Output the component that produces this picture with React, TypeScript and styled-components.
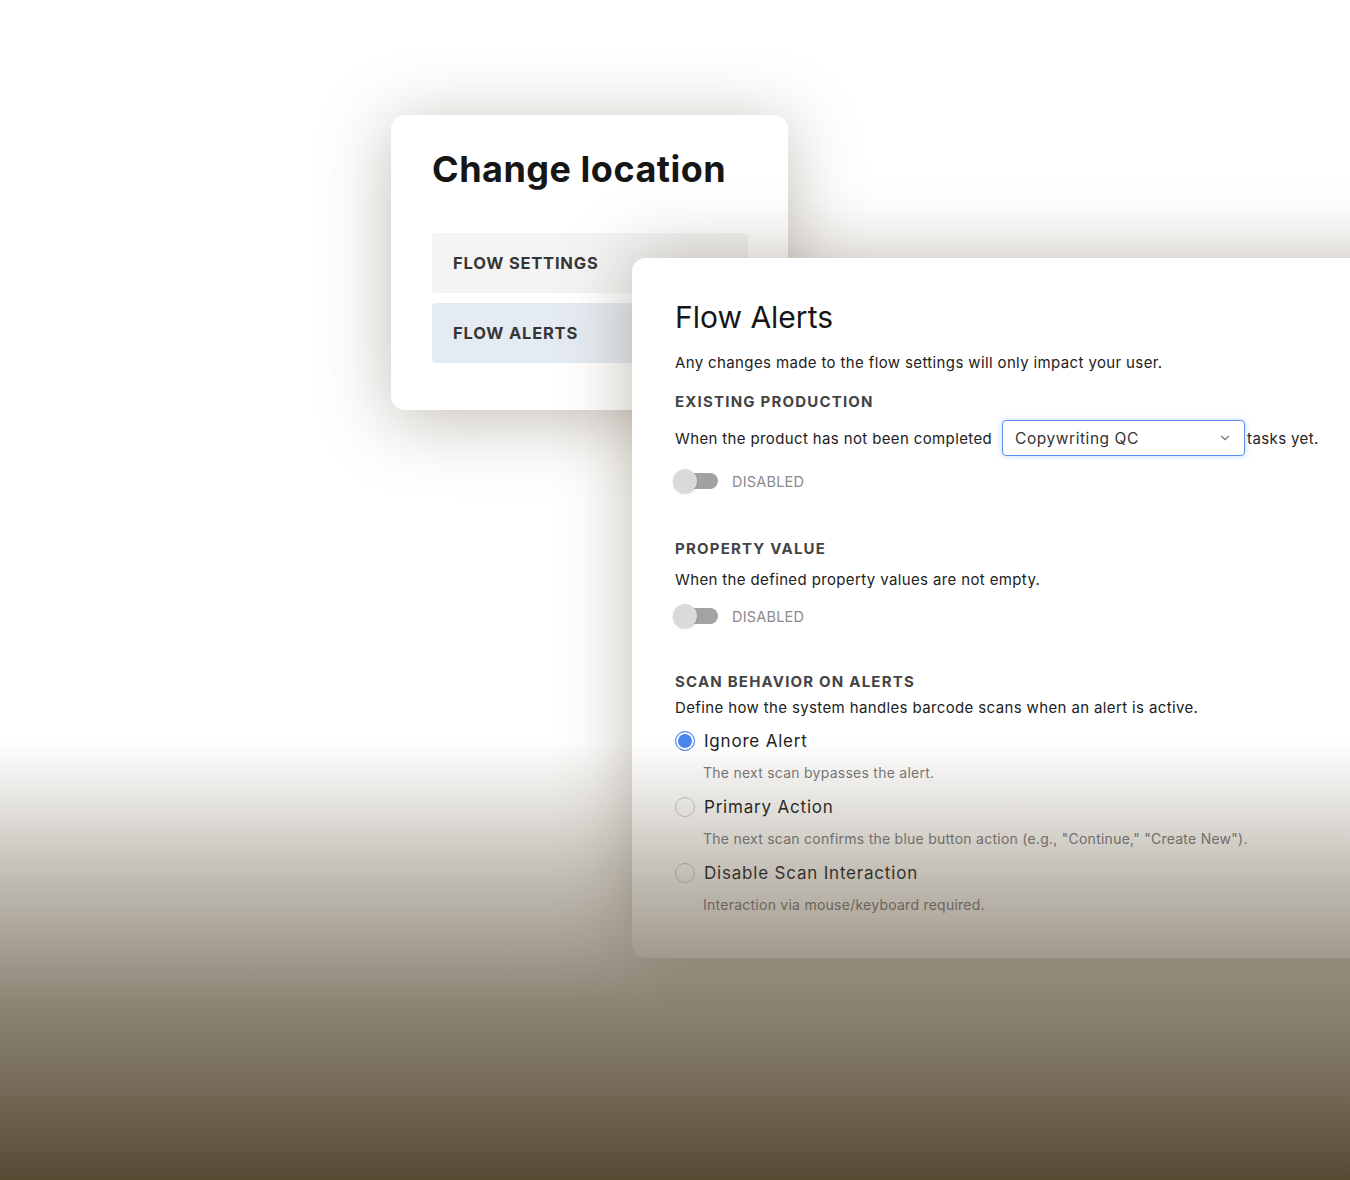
import styled, { createGlobalStyle } from "styled-components";
import { ChevronDown } from "lucide-react";

const GlobalStyle = createGlobalStyle`
  html, body {
    margin: 0;
    padding: 0;
    background: #ffffff;
  }
  body {
    font-family: Inter, "Noto Sans", "Liberation Sans", sans-serif;
    color: #1c1c1c;
    -webkit-font-smoothing: antialiased;
  }
`;

const Page = styled.div`
  position: relative;
  width: 1350px;
  height: 1180px;
  overflow: hidden;
  background: #ffffff;
`;

// two floating windows that overlap each other
const Stage = styled.div`
  display: grid;
  grid-template-columns: 391px 241px 156px 1fr;
  grid-template-rows: 115px 143px 152px auto;
`;

const LocationCard = styled.section`
  grid-column: 2 / 4;
  grid-row: 2 / 4;
  z-index: 1;
  background: #ffffff;
  border-radius: 14px;
  padding: 32px 40px 47px 41px;
  box-shadow: 0 10px 70px rgba(110, 98, 78, 0.42);
`;

const LocationTitle = styled.h1`
  margin: 0 0 42px;
  font-size: 36px;
  line-height: 44px;
  font-weight: 700;
  letter-spacing: 0.5px;
  color: #161616;
`;

const NavList = styled.div`
  display: flex;
  flex-direction: column;
  gap: 10px;
`;

const NavItem = styled.div<{ $active?: boolean }>`
  display: flex;
  align-items: center;
  height: 60px;
  padding-left: 21px;
  border-radius: 4px;
  background: ${(p) => (p.$active ? "#e5ebf2" : "#f4f4f4")};
  font-size: 16.5px;
  font-weight: 700;
  letter-spacing: 0.8px;
  color: #363636;
  text-transform: uppercase;
`;

const AlertsCard = styled.section`
  grid-column: 3 / 5;
  grid-row: 3 / 5;
  z-index: 2;
  width: 760px;
  background: #ffffff;
  border-radius: 14px;
  padding: 40px 0 43px 43px;
  box-shadow: 0 0 70px rgba(110, 98, 78, 0.45);
`;

const AlertsTitle = styled.h2`
  margin: 0 0 16px;
  font-size: 30px;
  line-height: 38px;
  font-weight: 400;
  color: #161616;
`;

const Text = styled.p<{ $gap?: number }>`
  margin: 0 0 ${(p) => p.$gap ?? 0}px;
  font-size: 15px;
  line-height: 22px;
  letter-spacing: 0.37px;
  color: #222222;
`;

const SectionLabel = styled.h3<{ $gap?: number }>`
  margin: 0 0 ${(p) => p.$gap ?? 0}px;
  font-size: 15px;
  line-height: 22px;
  font-weight: 700;
  letter-spacing: 1.2px;
  color: #444444;
  text-transform: uppercase;
`;

const Section = styled.div<{ $gap?: number }>`
  display: flex;
  flex-direction: column;
  margin-bottom: ${(p) => p.$gap ?? 0}px;
`;

const InlineRow = styled.div`
  display: flex;
  align-items: center;
  gap: 2px;
  font-size: 15px;
  letter-spacing: 0.37px;
  color: #222222;
`;

const Select = styled.div`
  display: flex;
  align-items: center;
  justify-content: space-between;
  width: 243px;
  height: 36px;
  box-sizing: border-box;
  margin-left: 8px;
  padding: 0 12px 0 12px;
  border: 1px solid #5b8ff0;
  border-radius: 4px;
  box-shadow: 0 0 6px rgba(80, 140, 240, 0.35);
  font-size: 15.5px;
  letter-spacing: 0.55px;
  color: #333333;
  background: #ffffff;

  svg {
    color: #777777;
  }
`;

const ToggleRow = styled.div`
  display: flex;
  align-items: center;
  gap: 14px;
  margin-top: 12px;
  margin-left: -2px;
`;

const Toggle = styled.span`
  position: relative;
  display: inline-block;
  width: 45px;
  height: 26px;

  &::before {
    content: "";
    position: absolute;
    left: 7px;
    top: 5px;
    width: 38px;
    height: 16px;
    border-radius: 8px;
    background: #a2a2a2;
  }

  &::after {
    content: "";
    position: absolute;
    left: 0;
    top: 1px;
    width: 24px;
    height: 24px;
    border-radius: 50%;
    background: #dadada;
    box-shadow: 0 1px 2px rgba(0, 0, 0, 0.18);
  }
`;

const ToggleText = styled.span`
  font-size: 14.5px;
  color: #8a8a8a;
  letter-spacing: 0.2px;
`;

const OptionList = styled.div`
  display: flex;
  flex-direction: column;
  gap: 12px;
  margin-top: 10px;
`;

const Option = styled.div`
  display: flex;
  flex-direction: column;
`;

const OptionHead = styled.label`
  display: flex;
  align-items: center;
  gap: 9px;
  height: 24px;
  font-size: 17px;
  letter-spacing: 0.8px;
  color: #1e1e1e;
`;

const Radio = styled.span<{ $checked?: boolean }>`
  box-sizing: border-box;
  width: 20px;
  height: 20px;
  border-radius: 50%;
  border: 1px solid ${(p) => (p.$checked ? "#4f86ec" : "#c9c9c9")};
  background: ${(p) => (p.$checked ? "#4a84ee" : "#ffffff")};
  box-shadow: ${(p) => (p.$checked ? "inset 0 0 0 2px #ffffff" : "none")};
`;

const OptionHint = styled.span`
  margin: 10px 0 0 28px;
  font-size: 14px;
  line-height: 20px;
  letter-spacing: 0.25px;
  color: #7a7a7a;
`;

// warm fade that sits over the bottom of the page
const Fade = styled.div`
  position: absolute;
  left: 0;
  right: 0;
  bottom: 0;
  height: 440px;
  z-index: 5;
  pointer-events: none;
  background: linear-gradient(
    180deg,
    rgba(87, 74, 51, 0) 0px,
    rgba(87, 74, 51, 0.15) 60px,
    rgba(87, 74, 51, 0.34) 127px,
    rgba(87, 74, 51, 0.5) 193px,
    rgba(87, 74, 51, 0.67) 260px,
    rgba(87, 74, 51, 0.79) 327px,
    rgba(87, 74, 51, 0.9) 393px,
    rgba(87, 74, 51, 1) 440px
  );
`;

const scanOptions = [
  { label: "Ignore Alert", hint: "The next scan bypasses the alert.", checked: true },
  {
    label: "Primary Action",
    hint: 'The next scan confirms the blue button action (e.g., "Continue," "Create New").',
    checked: false,
  },
  { label: "Disable Scan Interaction", hint: "Interaction via mouse/keyboard required.", checked: false },
];

function App() {
  return (
    <Page>
      <GlobalStyle />
      <Stage>
        <LocationCard>
          <LocationTitle>Change location</LocationTitle>
          <NavList>
            <NavItem>Flow settings</NavItem>
            <NavItem $active>Flow alerts</NavItem>
          </NavList>
        </LocationCard>

        <AlertsCard>
          <AlertsTitle>Flow Alerts</AlertsTitle>
          <Text $gap={17}>Any changes made to the flow settings will only impact your user.</Text>

          <Section $gap={44}>
            <SectionLabel $gap={7}>Existing production</SectionLabel>
            <InlineRow>
              When the product has not been completed
              <Select>
                Copywriting QC
                <ChevronDown size={14} strokeWidth={2} />
              </Select>
              tasks yet.
            </InlineRow>
            <ToggleRow>
              <Toggle />
              <ToggleText>DISABLED</ToggleText>
            </ToggleRow>
          </Section>

          <Section $gap={42}>
            <SectionLabel $gap={9}>Property value</SectionLabel>
            <Text>When the defined property values are not empty.</Text>
            <ToggleRow>
              <Toggle />
              <ToggleText>DISABLED</ToggleText>
            </ToggleRow>
          </Section>

          <Section>
            <SectionLabel $gap={4}>Scan behavior on alerts</SectionLabel>
            <Text>Define how the system handles barcode scans when an alert is active.</Text>
            <OptionList>
              {scanOptions.map((o) => (
                <Option key={o.label}>
                  <OptionHead>
                    <Radio $checked={o.checked} />
                    {o.label}
                  </OptionHead>
                  <OptionHint>{o.hint}</OptionHint>
                </Option>
              ))}
            </OptionList>
          </Section>
        </AlertsCard>
      </Stage>
      <Fade />
    </Page>
  );
}

export default App;
